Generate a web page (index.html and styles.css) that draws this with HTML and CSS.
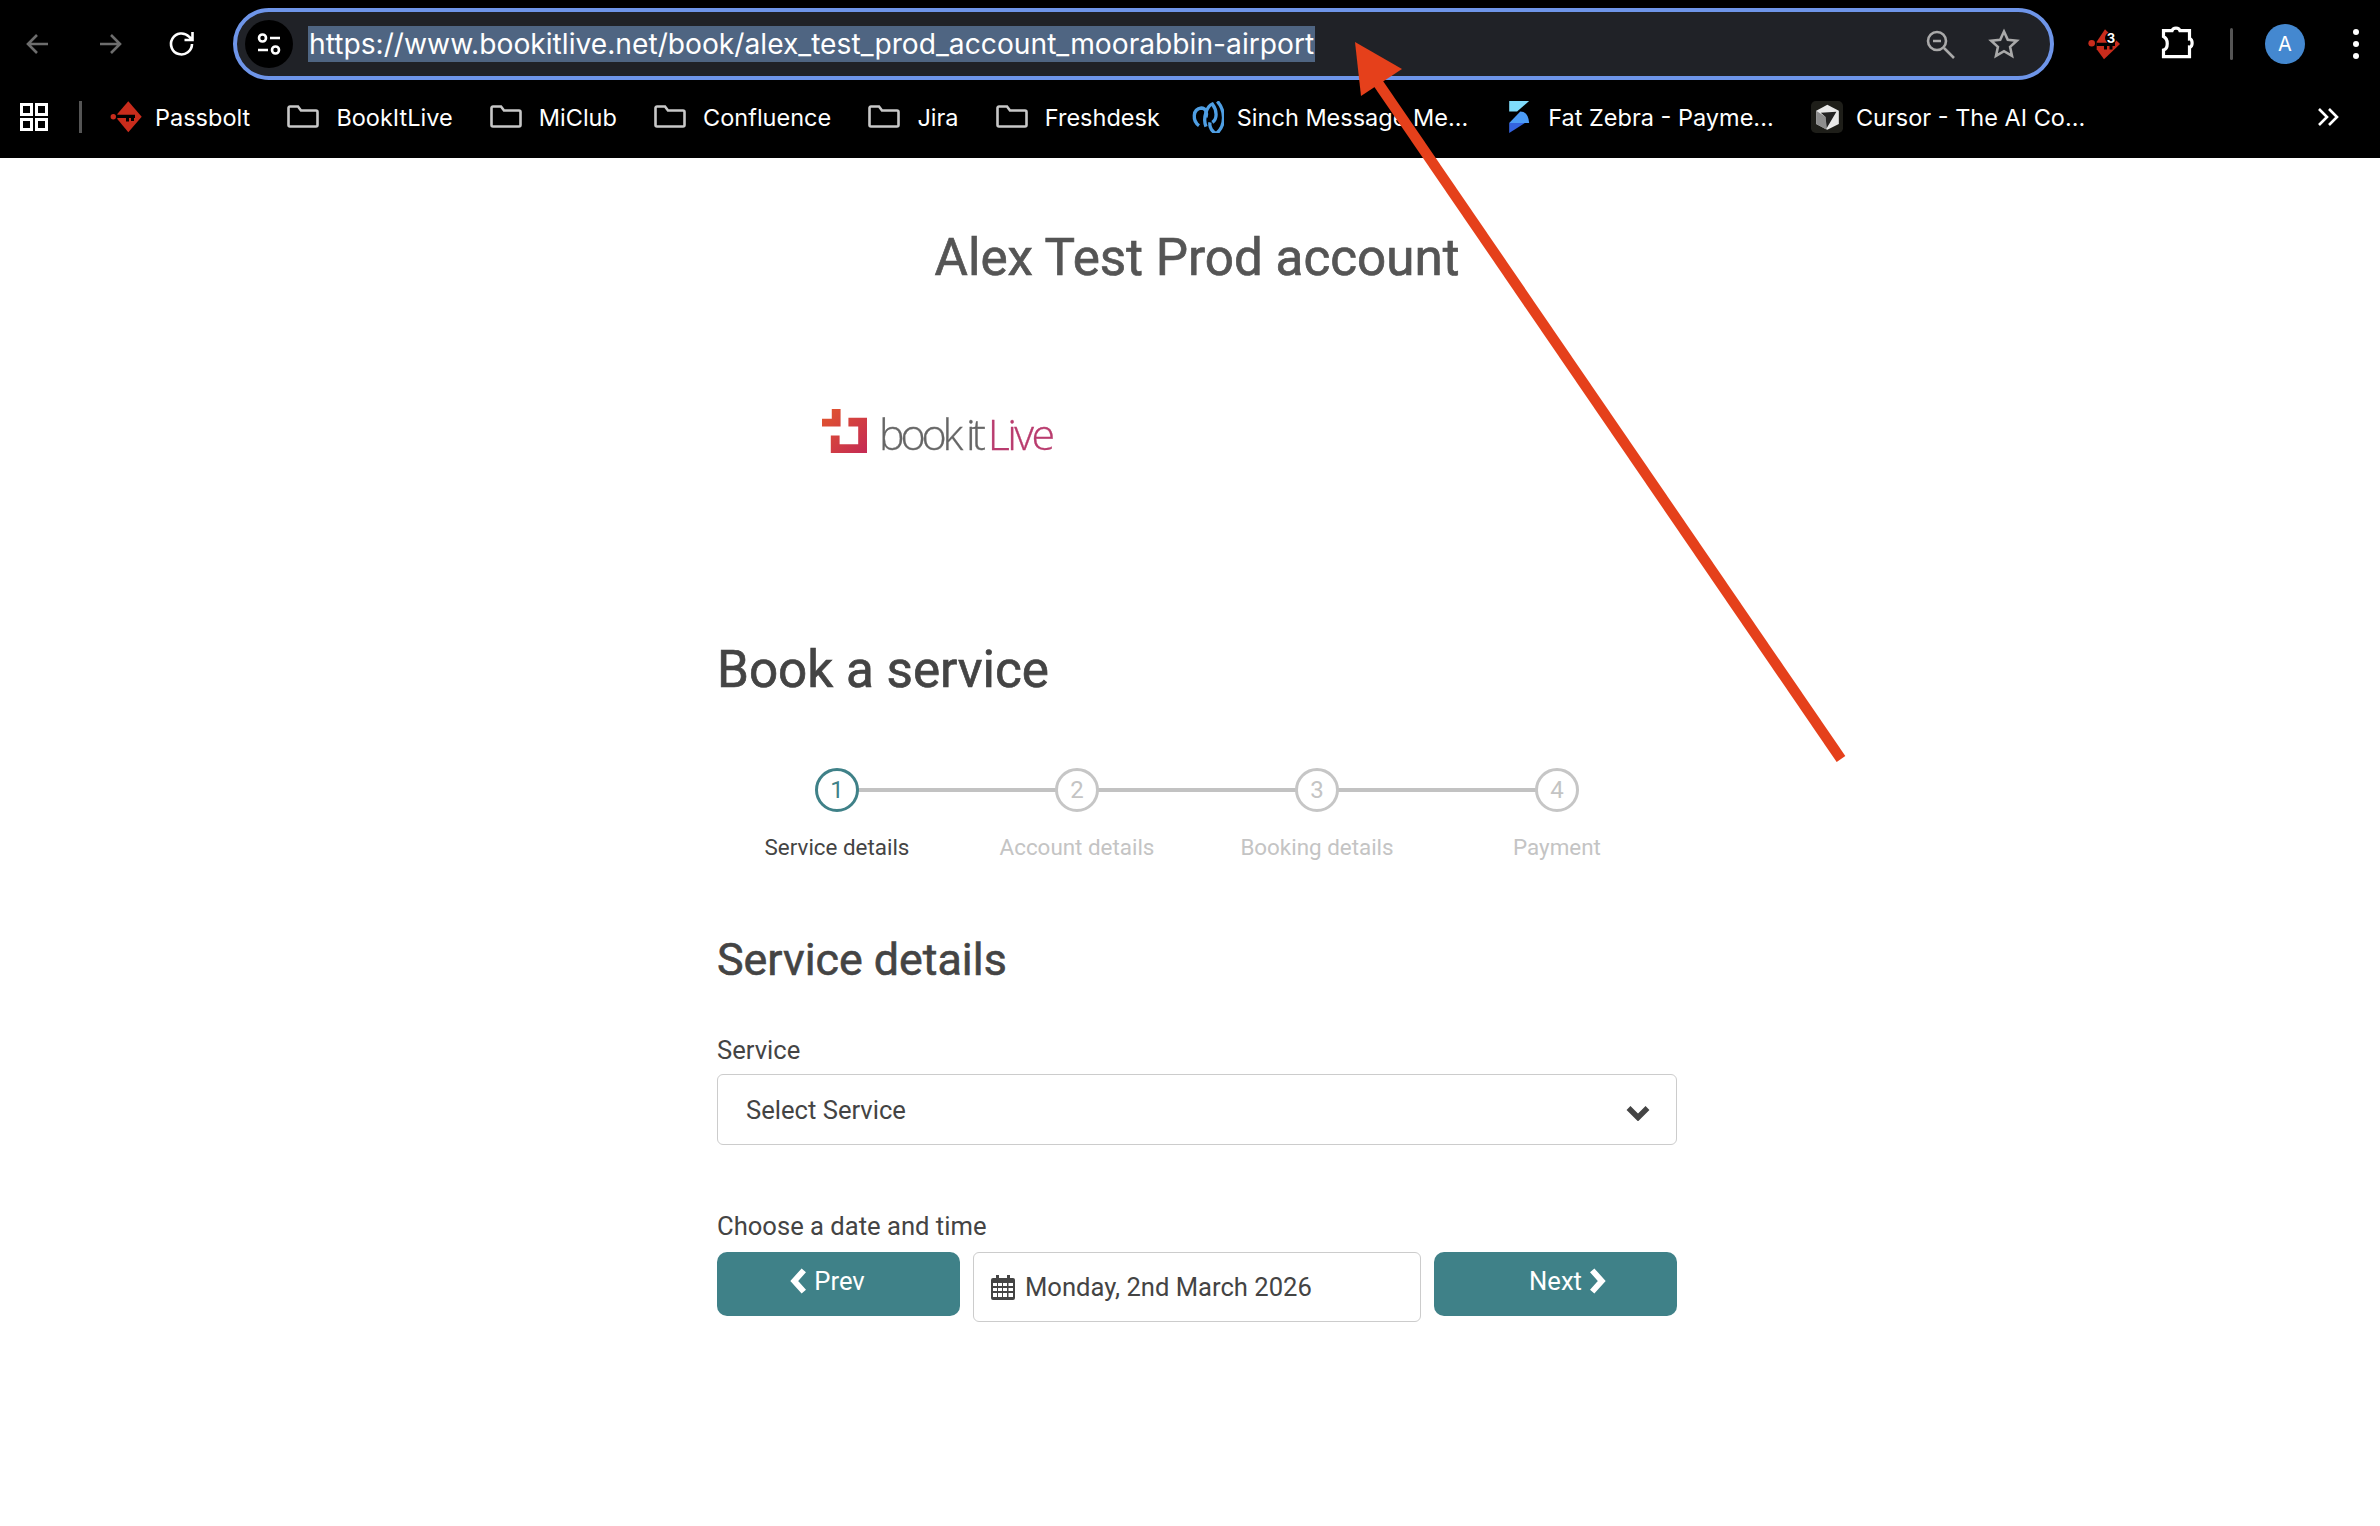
FILE: index.html
```
<!DOCTYPE html>
<html lang="en">
<head>
<meta charset="utf-8">
<title>Book a service</title>
<link rel="stylesheet" href="styles.css">
</head>
<body>
<header class="chrome">
  <div class="toolbar">
    <div class="nav">
      <svg class="ic dim" viewBox="0 0 32 32"><path d="M26 16H7M15 7l-9 9 9 9"/></svg>
      <svg class="ic dim" viewBox="0 0 32 32"><path d="M6 16h19M17 7l9 9-9 9"/></svg>
      <svg class="ic white" viewBox="0 0 32 32"><path d="M26 16a10.500 10.500 0 1 1-3-7.400L26 11.500M26.500 4v8h-8"/></svg>
    </div>
    <div class="omnibox">
      <span class="tune"><svg viewBox="0 0 32 32"><circle cx="9.500" cy="10" r="3.500"/><path d="M17 10h10M5 22h10"/><circle cx="22.500" cy="22" r="3.500"/></svg></span>
      <span class="url">https://www.bookitlive.net/book/alex_test_prod_account_moorabbin-airport</span>
      <span class="omni-icons">
        <svg class="ic grey" viewBox="0 0 32 32"><circle cx="13" cy="13" r="9"/><path d="M9 13h8M20 20l10 10"/></svg>
        <svg class="ic grey" viewBox="0 0 32 32"><path d="M16 3.500l3.800 8.300 9 1-6.700 6.100 1.900 8.900-8-4.600-8 4.600 1.900-8.900-6.700-6.100 9-1z"/></svg>
      </span>
    </div>
    <div class="ext">
      <span class="pass-ext"><svg viewBox="0 0 34 34"><path class="red" d="M9.700 14.700L18 2.300 33 17 17 32.300 9.700 22.300z"/><circle class="red" cx="4.700" cy="16.300" r="3.300"/><path d="M9.700 15.700H28V19h-2.500v3.500h-3V19h-2.500v3.500h-3V19H9.700z"/></svg><b class="badge">3</b></span>
      <svg class="ic puzzle" viewBox="0 0 32 32"><path d="M2.500 2.700H11c1-3.500 7-3.500 8 0h9.500V11c3.500-.5 3.500 8.500 0 8v9.700H2.500V22c5-1.500 5-11 0-13.500z"/></svg>
      <i class="sep"></i>
      <span class="avatar">A</span>
      <span class="dots"><i></i><i></i><i></i></span>
    </div>
  </div>
  <nav class="bookmarks">
    <svg class="apps" viewBox="0 0 28 28"><path d="M1.500 1.500h10v10h-10zM16.500 1.500h10v10h-10zM1.500 16.500h10v10h-10zM16.500 16.500h10v10h-10z"/></svg>
    <i class="bm-sep"></i>
    <a class="bm tight"><svg class="fav" viewBox="0 0 32 32"><path class="red" d="M7.300 13L18.300.3 31.700 15.700 18.300 31.300 7.300 18z"/><circle class="red" cx="3.300" cy="15.700" r="2.700"/><path d="M6.700 13.700H25V17h-1v3h-3v-3h-2v3.500h-3V17H6.700z"/></svg>Passbolt</a>
    <a class="bm"><svg class="folder" viewBox="0 0 32 24"><path d="M1.500 3a1.500 1.500 0 0 1 1.500-1.500h8l3 4h15a1.500 1.500 0 0 1 1.500 1.500v13a1.500 1.500 0 0 1-1.500 1.500H3A1.500 1.500 0 0 1 1.500 20z"/></svg>BookItLive</a>
    <a class="bm"><svg class="folder" viewBox="0 0 32 24"><path d="M1.500 3a1.500 1.500 0 0 1 1.500-1.500h8l3 4h15a1.500 1.500 0 0 1 1.500 1.500v13a1.500 1.500 0 0 1-1.500 1.500H3A1.500 1.500 0 0 1 1.500 20z"/></svg>MiClub</a>
    <a class="bm"><svg class="folder" viewBox="0 0 32 24"><path d="M1.500 3a1.500 1.500 0 0 1 1.500-1.500h8l3 4h15a1.500 1.500 0 0 1 1.500 1.500v13a1.500 1.500 0 0 1-1.500 1.500H3A1.500 1.500 0 0 1 1.500 20z"/></svg>Confluence</a>
    <a class="bm"><svg class="folder" viewBox="0 0 32 24"><path d="M1.500 3a1.500 1.500 0 0 1 1.500-1.500h8l3 4h15a1.500 1.500 0 0 1 1.500 1.500v13a1.500 1.500 0 0 1-1.500 1.500H3A1.500 1.500 0 0 1 1.500 20z"/></svg>Jira</a>
    <a class="bm shorter"><svg class="folder" viewBox="0 0 32 24"><path d="M1.500 3a1.500 1.500 0 0 1 1.500-1.500h8l3 4h15a1.500 1.500 0 0 1 1.500 1.500v13a1.500 1.500 0 0 1-1.500 1.500H3A1.500 1.500 0 0 1 1.500 20z"/></svg>Freshdesk</a>
    <a class="bm tight wider"><svg class="fav sinch" viewBox="24 21 96 96"><path d="M45 95C25 80 25 45 52 42c13 0 18 13 14 28"/><path d="M66 98C55 70 70 35 85 30c15 20 15 45 0 55"/><path d="M100 22c25 28 25 73-2 96-13-3-23-18-20-33"/></svg>Sinch Message Me...</a>
    <a class="bm"><svg class="fav zebra" viewBox="21 18 69 98"><path fill="#7fdcfb" d="M24 18h61L48 50H24z"/><path fill="#4c9cf6" d="M24 85l34-35q24 0 27 35z"/><path fill="#3463de" d="M24 85h48L24 116z"/></svg>Fat Zebra - Payme...</a>
    <a class="bm tight"><svg class="fav" viewBox="30 22 92 92"><rect x="30" y="22" width="92" height="92" rx="14" fill="#1e1e19"/><path fill="#e8e8e8" d="M77 33l33 17v38l-33 17-32-17V50z"/><path fill="#8d8d8d" d="M45 50l27 18 3 37-30-17z"/><path fill="#222" d="M58 56l45-3-28 47-3-32z"/></svg>Cursor - The AI Co...</a>
    <svg class="more" viewBox="0 0 22 20"><path d="M2 2l8 8-8 8M12 2l8 8-8 8"/></svg>
  </nav>
</header>

<main class="page">
  <h1 class="title">Alex Test Prod account</h1>
  <div class="logo">
    <svg class="logo-mark" viewBox="0 0 46 46"><defs><linearGradient id="lg" x1="0" y1="0" x2="1" y2="1"><stop offset="0" stop-color="#e2562c"/><stop offset="1" stop-color="#c42a55"/></linearGradient></defs><path fill="url(#lg)" d="M10 0h9v18H0V10h10zM27 9h19v36H9V27h9v9h19V18H27z"/></svg>
    <span class="logo-text">book it <em>Live</em></span>
  </div>
  <h2 class="heading">Book a service</h2>
  <ol class="steps">
    <li class="step active"><span class="dot">1</span><span class="lbl">Service details</span></li>
    <li class="step"><span class="dot">2</span><span class="lbl">Account details</span></li>
    <li class="step"><span class="dot">3</span><span class="lbl">Booking details</span></li>
    <li class="step"><span class="dot">4</span><span class="lbl">Payment</span></li>
  </ol>
  <h3 class="sub">Service details</h3>
  <label class="field-label">Service</label>
  <div class="select">Select Service
    <svg class="chev" viewBox="0 0 24 16"><path d="M2.500 3l9.500 9.500L21.500 3"/></svg>
  </div>
  <label class="field-label second">Choose a date and time</label>
  <div class="date-row">
    <button class="btn prev"><svg class="arr" viewBox="0 0 16 24"><path d="M13 2L4 12l9 10"/></svg>Prev</button>
    <div class="date">
      <svg class="cal" viewBox="0 0 24 26"><path fill="#444" d="M2 4h3V1h3v3h8V1h3v3h3a2 2 0 0 1 2 2v18a2 2 0 0 1-2 2H2a2 2 0 0 1-2-2V6a2 2 0 0 1 2-2z"/><path fill="#fff" d="M2 9h4v3H2zM7 9h4v3H7zM12 9h4v3h-4zM17.500 9H22v3h-4.500zM2 14h4v3H2zM7 14h4v3H7zM12 14h4v3h-4zM17.500 14H22v3h-4.500zM2 19h4v4H2zM7 19h4v4H7zM12 19h4v4h-4zM17.500 19H22v4h-4.500z"/></svg>
      Monday, 2nd March 2026
    </div>
    <button class="btn next">Next<svg class="arr" viewBox="0 0 16 24"><path d="M3 2l9 10-9 10"/></svg></button>
  </div>
</main>

<svg class="annotation" viewBox="0 0 2380 1526"><path class="shaft" d="M1378 83L1841 759"/><path class="head" d="M1355 42L1402 69 1361 96z"/></svg>
</body>
</html>
```
FILE: styles.css
```
* { box-sizing: border-box; }
html, body { margin: 0; padding: 0; }
body { width: 2380px; height: 1526px; background: #fff; overflow: hidden; position: relative; font-family: Roboto, "Liberation Sans", sans-serif; color: #444; }

.chrome { background: #000; height: 158px; color: #fff; font-family: Inter, Roboto, sans-serif; }
.toolbar { height: 88px; display: flex; align-items: center; }
.nav { display: flex; align-items: center; gap: 40px; width: 233px; padding-left: 22px; flex: none; }
.ic { width: 32px; height: 32px; fill: none; stroke-width: 2.600; flex: none; }
.dim { stroke: #6d6d6d; }
.white { stroke: #fff; }
.grey { stroke: #a9a9a9; }
.omnibox { width: 1821px; height: 72px; flex: none; border: 4px solid #6e95e9; border-radius: 36px; background: #202227; display: flex; align-items: center; padding-left: 8px; }
.tune { width: 48px; height: 48px; border-radius: 50%; background: #000; display: flex; align-items: center; justify-content: center; flex: none; }
.tune svg { width: 32px; height: 32px; fill: none; stroke: #fff; stroke-width: 2.600; }
.url { margin-left: 15px; height: 36px; line-height: 36px; padding: 0 1px; background: #4f6582; font-size: 28.200px; white-space: nowrap; }
.omni-icons { margin-left: auto; display: flex; gap: 32px; padding-right: 30px; }
.ext { flex: 1; display: flex; align-items: center; padding-left: 33px; }
.pass-ext { position: relative; width: 34px; height: 34px; margin-right: 40px; flex: none; }
.pass-ext svg { width: 34px; height: 34px; display: block; }
.red { fill: #c92c1c; }
.badge { position: absolute; left: 18px; top: 5px; width: 12px; height: 12px; font-size: 13px; line-height: 12px; text-align: center; font-weight: 700; color: #fff; background: #000; border-radius: 50%; }
.puzzle { stroke: #fff; stroke-width: 3.200; margin-right: 37px; overflow: visible; }
.sep { width: 3px; height: 32px; background: #555; margin-right: 32px; border-radius: 2px; flex: none; }
.avatar { width: 40px; height: 40px; border-radius: 50%; background: #4488d0; color: #fff; font-size: 20px; line-height: 40px; text-align: center; margin-right: 48px; flex: none; }
.dots { display: flex; flex-direction: column; gap: 6px; }
.dots i { width: 6px; height: 6px; border-radius: 50%; background: #fff; }

.bookmarks { height: 58px; display: flex; align-items: center; padding-left: 20px; position: relative; font-size: 23.500px; white-space: nowrap; }
.apps { width: 28px; height: 28px; fill: none; stroke: #fff; stroke-width: 3; margin-right: 31px; flex: none; }
.bm-sep { width: 3px; height: 32px; background: #555; margin-right: 28px; flex: none; }
.bm { display: flex; align-items: center; gap: 17px; margin-right: 37.200px; color: #fff; }
.tight { gap: 13px; }
.shorter { margin-right: 32px; }
.wider { margin-right: 40px; }
.fav { width: 32px; height: 32px; flex: none; }
.folder { width: 32px; height: 24px; fill: none; stroke: #c8c8c8; stroke-width: 2.600; flex: none; }
.sinch { fill: none; stroke: #4f9fe4; stroke-width: 10; }
.zebra { width: 23px; }
.more { position: absolute; left: 2317px; top: 19px; width: 22px; height: 20px; fill: none; stroke: #fff; stroke-width: 2.600; }

.page { width: 960px; margin: 0 0 0 717px; }
.title { margin: 70px 0 0; text-align: center; font-size: 51.200px; line-height: 60px; font-weight: 400; color: #555; -webkit-text-stroke: .7px #555; }
.logo { margin: 121px 0 0 105px; height: 44px; display: flex; align-items: center; gap: 12px; }
.logo-mark { width: 45px; height: 45px; flex: none; }
.logo-text { font-family: "Open Sans", sans-serif; font-weight: 300; font-size: 43px; line-height: 44px; color: #666; letter-spacing: -4.200px; white-space: nowrap; filter: blur(.4px); position: relative; top: 3px; -webkit-text-stroke: .3px; }
.logo-text em { font-style: normal; color: #b93c6e; letter-spacing: -2.600px; margin-left: -1px; }
.heading { margin: 187px 0 0; font-size: 51.200px; line-height: 60px; font-weight: 400; color: #444; -webkit-text-stroke: .7px #444; }
.steps { list-style: none; margin: 68px 0 0; padding: 0; display: grid; grid-template-columns: repeat(4, 240px); }
.step { display: flex; flex-direction: column; align-items: center; position: relative; color: #c4c4c4; }
.step:not(:last-child)::after { content: ""; position: absolute; left: 120px; top: 20px; width: 240px; height: 4px; background: #c2c2c2; }
.dot { width: 44px; height: 44px; border: 3px solid #c6c6c6; border-radius: 50%; background: #fff; font-size: 24px; line-height: 38px; text-align: center; position: relative; z-index: 1; }
.lbl { margin-top: 20px; font-size: 22.400px; line-height: 30px; }
.active { color: #444; }
.active .dot { border-color: #3f8188; color: #3f8188; }
.sub { margin: 71px 0 0; font-size: 44.800px; line-height: 54px; font-weight: 400; color: #444; -webkit-text-stroke: .6px #444; }
.field-label { display: block; margin-top: 48px; font-size: 25.600px; line-height: 30px; color: #444; }
.second { margin-top: 65.500px; }
.select { margin-top: 9px; height: 71px; border: 1.500px solid #ccc; border-radius: 6px; padding: 0 28px; display: flex; align-items: center; justify-content: space-between; font-size: 25.600px; color: #444; }
.chev { width: 24px; height: 16px; margin-top: 6px; margin-right: -2px; fill: none; stroke: #444; stroke-width: 5.500; flex: none; }
.date-row { margin-top: 11px; display: flex; align-items: flex-start; gap: 13px; }
.btn { width: 243px; height: 64px; border: 0; border-radius: 10px; background: #3f8188; color: #fff; font: 400 25.600px Roboto, sans-serif; display: flex; align-items: center; justify-content: center; gap: 7px; padding: 0 0 5px; }
.prev { padding-right: 22px; }
.next { padding-left: 24px; }
.arr { width: 17px; height: 26px; fill: none; stroke: #fff; stroke-width: 5.500; flex: none; }
.date { width: 448px; height: 70px; border: 1.500px solid #ccc; border-radius: 6px; display: flex; align-items: center; gap: 10px; padding-left: 17px; font-size: 25.600px; color: #444; }
.cal { width: 24px; height: 26px; flex: none; }

.annotation { position: absolute; left: 0; top: 0; width: 2380px; height: 1526px; pointer-events: none; }
.shaft { fill: none; stroke: #e5401b; stroke-width: 10.500; }
.head { fill: #e5401b; }
```
